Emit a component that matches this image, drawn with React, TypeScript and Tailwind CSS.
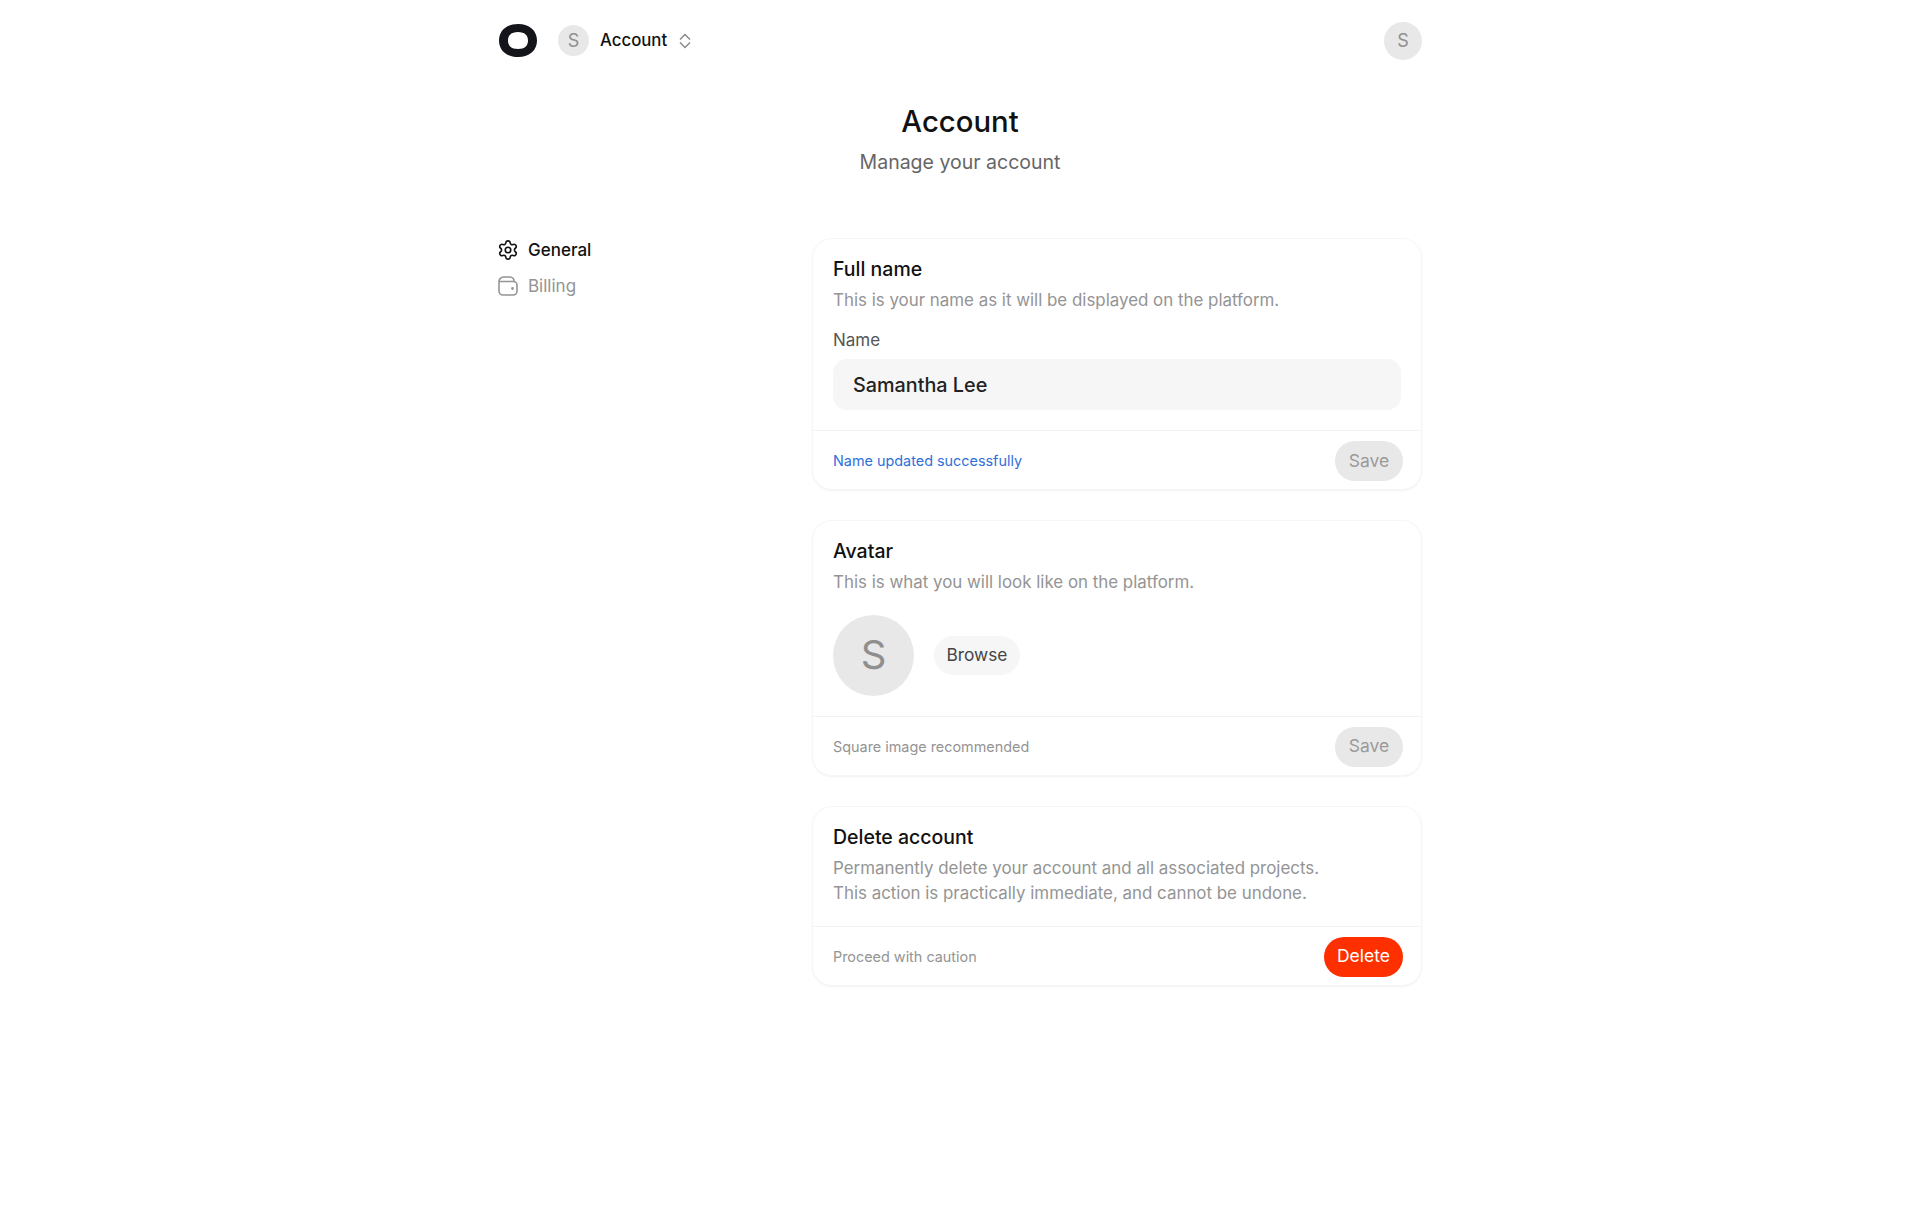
import { Settings } from "lucide-react"

function Avatar({ size, text }: { size: string; text: string }) {
    return (
        <div className={`${size} flex items-center justify-center rounded-full bg-[#e8e8e8] text-[#8f8f8f] shrink-0`}>
            {text}
        </div>
    )
}

function Card({ title, desc, children, note, noteClass, button, buttonClass }: {
    title: string
    desc: string[]
    children?: React.ReactNode
    note: string
    noteClass: string
    button: string
    buttonClass: string
}) {
    return (
        <section className="rounded-[20px] bg-white border border-[#f6f6f6] shadow-[0_1px_2px_rgba(0,0,0,0.05)]">
            <div className="px-5 pt-[15px] pb-5">
                <h2 className="text-[19.5px] leading-[30px] font-[450] text-[#111]">{title}</h2>
                <div className="mt-[4px] -mb-[1px] text-[16.9px] leading-[25.5px] text-[#949494]">
                    {desc.map((line) => (
                        <p key={line}>{line}</p>
                    ))}
                </div>
                {children}
            </div>
            <div className="flex items-center justify-between h-[59px] pt-[2px] pl-5 pr-[18px] border-t border-[#f3f3f3]">
                <span className={`text-[14.4px] ${noteClass}`}>{note}</span>
                <button className={`h-10 rounded-full text-[17.5px] ${buttonClass}`}>{button}</button>
            </div>
        </section>
    )
}

export default function App() {
    return (
        <div className="min-h-[1205px] bg-white font-['Inter',sans-serif]">
            <div className="mx-auto w-[924px]">
                <header className="flex items-center justify-between h-[81px]">
                    <div className="flex items-center">
                        <svg width="40" height="33" viewBox="0 0 40 33" className="text-[#14151a]">
                            <path
                                fillRule="evenodd"
                                fill="currentColor"
                                d="M20 0C32 0 39 7 39 16.500S32 33 20 33 1 26 1 16.500 8 0 20 0ZM20 8C13 8 10 11.500 10 16.500S13 25 20 25 30 21.500 30 16.500 27 8 20 8Z"
                            />
                        </svg>
                        <div className="ml-[20px]">
                            <Avatar size="w-[31px] h-[31px] text-[18px]" text="S" />
                        </div>
                        <span className="ml-[11px] pt-[1px] text-[16.8px] font-[450] text-[#111]">Account</span>
                        <svg width="14" height="16" viewBox="0 0 14 16" fill="none" stroke="#8a8a8a" strokeWidth="1.5" className="ml-[11px]">
                            <path d="M2 6.500 7 1.500l5 5M2 9.500l5 5 5-5" />
                        </svg>
                    </div>
                    <Avatar size="w-[38px] h-[38px] text-[18px]" text="S" />
                </header>

                <div className="text-center">
                    <h1 className="mt-[21px] text-[29.3px] leading-[40px] font-[450] text-[#111]">Account</h1>
                    <p className="mt-[5px] text-[19.5px] leading-[30px] text-[#666]">Manage your account</p>
                </div>

                <div className="flex mt-[61px]">
                    <nav className="flex flex-col gap-3 w-[314px] shrink-0 text-[17px]">
                        <div className="flex items-center gap-[9px] h-6 font-[450] text-[#111] -ml-[1px]">
                            <Settings className="w-[22px] h-[22px]" strokeWidth={1.75} />
                            <span className="pt-[2px]">General</span>
                        </div>
                        <div className="flex items-center gap-[10px] h-6 text-[#949494]">
                            <svg width="20" height="20" viewBox="0 0 20 20" fill="none" stroke="currentColor" strokeWidth="1.6">
                                <path d="M1 5.500V15a4 4 0 0 0 4 4h10a4 4 0 0 0 4-4V9a3.500 3.500 0 0 0-3.500-3.500H1M1 5.500A4.500 4.500 0 0 1 5.500 1H12a4 4 0 0 1 4 4.500" />
                                <circle cx="14.500" cy="12.500" r="0.6" fill="currentColor" />
                            </svg>
                            <span className="pt-[2px]">Billing</span>
                        </div>
                    </nav>

                    <main className="flex-1 flex flex-col gap-[30px]">
                        <Card
                            title="Full name"
                            desc={["This is your name as it will be displayed on the platform."]}
                            note="Name updated successfully"
                            noteClass="text-[#2f6fdb]"
                            button="Save"
                            buttonClass="w-[68px] bg-[#e8e8e8] text-[#9a9a9a]"
                        >
                            <div className="mt-[14px] pt-[0.5px] text-[17px] leading-[26px] text-[#555]">Name</div>
                            <input
                                readOnly
                                value="Samantha Lee"
                                className="mt-[6px] block w-full h-[51px] rounded-[14px] bg-[#f6f6f6] px-5 text-[19.8px] font-[450] text-[#222] outline-none"
                            />
                        </Card>
                        <Card
                            title="Avatar"
                            desc={["This is what you will look like on the platform."]}
                            note="Square image recommended"
                            noteClass="text-[#949494]"
                            button="Save"
                            buttonClass="w-[68px] bg-[#e8e8e8] text-[#9a9a9a]"
                        >
                            <div className="mt-[20px] flex items-center gap-5">
                                <Avatar size="w-[81px] h-[81px] text-[40px]" text="S" />
                                <button className="h-[39px] w-[86px] rounded-full bg-[#f6f6f6] text-[17.3px] text-[#444]">
                                    Browse
                                </button>
                            </div>
                        </Card>
                        <Card
                            title="Delete account"
                            desc={[
                                "Permanently delete your account and all associated projects.",
                                "This action is practically immediate, and cannot be undone.",
                            ]}
                            note="Proceed with caution"
                            noteClass="text-[#949494]"
                            button="Delete"
                            buttonClass="w-[79px] bg-[#ff3000] text-white"
                        />
                    </main>
                </div>
            </div>
        </div>
    )
}
